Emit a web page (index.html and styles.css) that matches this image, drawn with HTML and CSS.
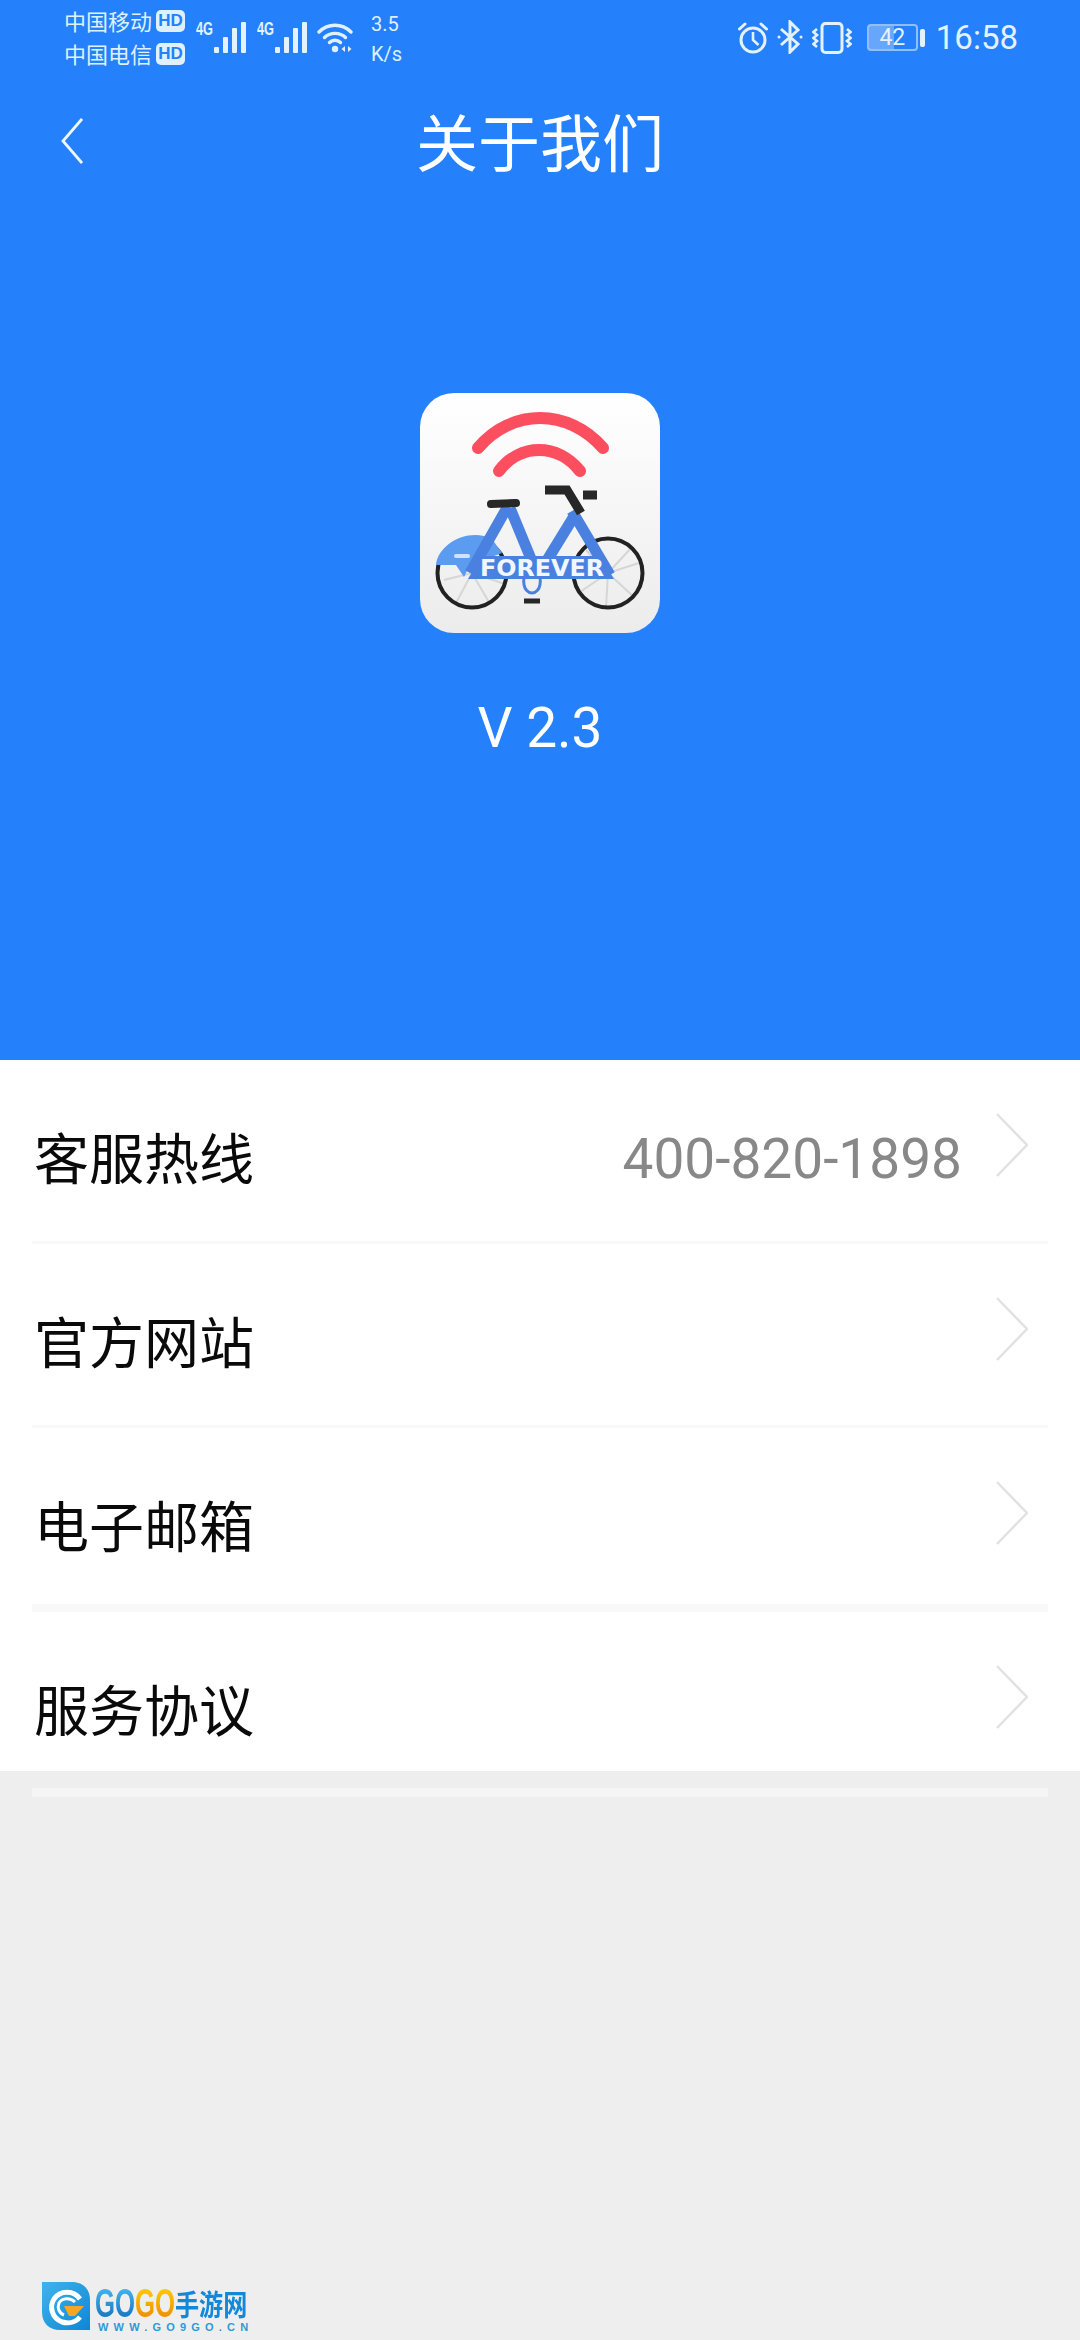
FILE: index.html
```html
<!DOCTYPE html>
<html lang="zh-CN">
<head>
  <meta charset="UTF-8">
  <meta name="viewport" content="width=device-width, initial-scale=1.0">
  <title>关于我们</title>
  <link rel="stylesheet" href="styles.css">
</head>
<body>
  <div class="page">
    <header class="hero">
      <!-- 状态栏 -->
      <div class="status">
        <div class="carriers">
          <div class="carrier">中国移动<span class="hd">HD</span></div>
          <div class="carrier">中国电信<span class="hd">HD</span></div>
        </div>
        <svg class="signal signal-first" width="50" height="38" viewBox="0 -6 50 38">
          <text class="signal-text" x="0" y="14" transform="scale(0.71 1)">4G</text>
          <rect x="18" y="26" width="5" height="6" rx="1"/>
          <rect x="27" y="16" width="5" height="16" rx="1"/>
          <rect x="36" y="7" width="5" height="25" rx="1"/>
          <rect x="45" y="1" width="5" height="31" rx="1"/>
        </svg>
        <svg class="signal signal-second" width="50" height="38" viewBox="0 -6 50 38">
          <text class="signal-text" x="0" y="14" transform="scale(0.71 1)">4G</text>
          <rect x="18" y="26" width="5" height="6" rx="1"/>
          <rect x="27" y="16" width="5" height="16" rx="1"/>
          <rect x="36" y="7" width="5" height="25" rx="1"/>
          <rect x="45" y="1" width="5" height="31" rx="1"/>
        </svg>
        <svg class="wifi" width="36" height="32" viewBox="0 0 36 32" fill="none" stroke="#dff0ff" stroke-width="3.4" stroke-linecap="round">
          <path d="M2 10 C11 1 25 1 34 10"/>
          <path d="M7.5 15.5 C13 10 23 10 28.500 15.500"/>
          <path d="M12.500 20.500 C15.500 17.500 20.500 17.500 23.500 20.500"/>
          <circle cx="18" cy="27" r="3.200" fill="#dff0ff" stroke="none"/>
          <path d="M28 24 L24.500 27 L28 30 Z M31 24 L34.500 27 L31 30 Z" fill="#dff0ff" stroke="none"/>
        </svg>
        <div class="speed">
          <div>3.5</div>
          <div>K/s</div>
        </div>
        <div class="status-right">
          <svg class="alarm" width="30" height="32" viewBox="0 0 30 32" fill="none" stroke="#e4f2ff" stroke-width="3">
            <circle cx="15" cy="18" r="12"/>
            <path d="M15 10 V18 L20.500 23" stroke-width="2.600"/>
            <path d="M1.500 7 L7 2 M28.500 7 L23 2" stroke-linecap="round"/>
          </svg>
          <svg class="bluetooth" width="26" height="34" viewBox="0 0 26 34" fill="none" stroke="#e4f2ff" stroke-width="3">
            <path d="M4 9 L21 24 L13 32 V2 L21 10 L4 25"/>
            <circle cx="2" cy="17" r="1.500" fill="#e4f2ff" stroke="none"/>
            <circle cx="24" cy="17" r="1.500" fill="#e4f2ff" stroke="none"/>
          </svg>
          <svg class="vibrate" width="40" height="32" viewBox="0 0 40 32" fill="none" stroke="#e4f2ff" stroke-width="2.600">
            <rect x="10" y="1.500" width="20" height="29" rx="3.500" stroke-width="3"/>
            <path d="M5 7 L1.500 10 L5 13 L1.500 16 L5 19 L1.500 22 L5 25"/>
            <path d="M35 7 L38.500 10 L35 13 L38.500 16 L35 19 L38.500 22 L35 25"/>
          </svg>
          <div class="battery">
            <div class="battery-body"><div class="battery-level"></div><span class="battery-num">42</span></div>
            <div class="battery-nub"></div>
          </div>
          <div class="clock">16:58</div>
        </div>
      </div>

      <!-- 标题栏 -->
      <div class="nav">
        <svg class="back" width="22" height="46" viewBox="0 0 22 46" fill="none" stroke="#eef7ff" stroke-width="2.800">
          <path d="M21 1 L2 23 L21 45"/>
        </svg>
        <h1 class="title">关于我们</h1>
      </div>

      <!-- 应用图标 -->
      <svg class="app-icon" width="240" height="240" viewBox="0 0 240 240">
        <defs>
          <linearGradient id="iconBg" x1="0" y1="0" x2="0" y2="1">
            <stop offset="0" stop-color="#ffffff"/>
            <stop offset="1" stop-color="#ececec"/>
          </linearGradient>
        </defs>
        <rect width="240" height="240" rx="34" fill="url(#iconBg)"/>
        <g fill="none" stroke="#fb4f60" stroke-width="12" stroke-linecap="round">
          <path d="M58 55 C92 15 148 15 183 55"/>
          <path d="M79 78 C100 50 138 50 160 78"/>
        </g>
        <g stroke="#d6d6d6" stroke-width="2">
          <path d="M52 180 L30 157 M52 180 L24 187 M52 180 L36 210 M52 180 L70 211 M52 180 L85 191"/>
          <path d="M188 180 L166 157 M188 180 L222 169 M188 180 L212 154 M188 180 L160 199 M188 180 L186 215 M188 180 L215 205"/>
        </g>
        <g fill="none" stroke="#222" stroke-width="4">
          <circle cx="52" cy="180" r="34.500"/>
          <circle cx="188" cy="180" r="34.500"/>
        </g>
        <path d="M16 172 C18 150 50 134 72 146 L82 160 L50 172 L44 184 L36 172 Z" fill="#5b9bf0"/>
        <rect x="34" y="161" width="16" height="4" rx="2" fill="#cfe2ff"/>
        <g fill="none" stroke="#4a80e0" stroke-width="11">
          <path d="M88 113 L50 180"/>
          <path d="M90 115 L116 178"/>
          <path d="M153 125 L118 182"/>
          <path d="M152 118 L190 182"/>
        </g>
        <path d="M104 184 C102 198 110 200 112 200 C114 200 122 198 120 184" fill="none" stroke="#4a80e0" stroke-width="3"/>
        <path d="M48 186 L62 163 L180 163 L194 186 Z" fill="#4a80e0"/>
        <text class="icon-text" x="60" y="183" textLength="124" lengthAdjust="spacingAndGlyphs">FOREVER</text>
        <g fill="none" stroke="#272727" stroke-linecap="round">
          <path d="M71 111 L96 110" stroke-width="8"/>
          <path d="M125 97 L147 97 L161 120" stroke-width="9" stroke-linecap="butt"/>
          <path d="M163 102 L177 102" stroke-width="9" stroke-linecap="butt"/>
          <path d="M104 208 L120 208" stroke-width="5" stroke-linecap="butt"/>
        </g>
      </svg>
      <div class="version">V 2.3</div>
    </header>

    <!-- 列表 -->
    <section class="list">
      <div class="row">
        <span class="row-label">客服热线</span>
        <span class="row-value">400-820-1898</span>
        <svg class="chevron" width="32" height="64" viewBox="0 0 32 64" fill="none" stroke="#e2e2e2" stroke-width="2.500">
          <path d="M1 1 L31 32 L1 63"/>
        </svg>
      </div>
      <div class="row">
        <span class="row-label">官方网站</span>
        <svg class="chevron" width="32" height="64" viewBox="0 0 32 64" fill="none" stroke="#e2e2e2" stroke-width="2.500">
          <path d="M1 1 L31 32 L1 63"/>
        </svg>
      </div>
      <div class="row row-thick">
        <span class="row-label">电子邮箱</span>
        <svg class="chevron" width="32" height="64" viewBox="0 0 32 64" fill="none" stroke="#e2e2e2" stroke-width="2.500">
          <path d="M1 1 L31 32 L1 63"/>
        </svg>
      </div>
      <div class="row row-last">
        <span class="row-label">服务协议</span>
        <svg class="chevron" width="32" height="64" viewBox="0 0 32 64" fill="none" stroke="#e2e2e2" stroke-width="2.500">
          <path d="M1 1 L31 32 L1 63"/>
        </svg>
      </div>
    </section>
    <div class="list-end"></div>
  </div>

  <!-- 水印 -->
  <div class="watermark">
    <svg width="48" height="48" viewBox="0 0 48 48">
      <defs>
        <linearGradient id="wmBg" x1="0" y1="0" x2="1" y2="1">
          <stop offset="0" stop-color="#3fb4ea"/>
          <stop offset="1" stop-color="#0f86d6"/>
        </linearGradient>
      </defs>
      <path d="M0 0 H30 C41 0 48 7 48 18 V48 H18 C7 48 0 41 0 30 Z" fill="url(#wmBg)"/>
      <path d="M38 17 C32 8 18 8 12 17 C7 25 10 36 20 40 C27 42 34 40 38 35" fill="none" stroke="#fff" stroke-width="5"/>
      <path d="M33 20 C28 15 20 16 17 21 C15 26 17 31 22 33" fill="none" stroke="#fff" stroke-width="3"/>
      <path d="M22 24 H42 L33 34 H27 Z" fill="#f6a623"/>
    </svg>
    <div class="wm-brand">
      <div class="wm-name">
        <span class="wm-go">GO</span><span class="wm-go wm-orange">GO</span><span class="wm-cn">手游网</span>
      </div>
      <div class="wm-url">WWW.GO9GO.CN</div>
    </div>
  </div>
</body>
</html>
```

FILE: styles.css
```css
/* 全局 */
* {
  box-sizing: border-box;
}
html,
body {
  height: 2340px;
  overflow: hidden;
}
body {
  margin: 0;
  background-color: #eeeeee;
  font-family: Roboto, "Noto Sans CJK SC", sans-serif;
}
.page {
  width: 1080px;
  height: 2340px;
  overflow: hidden;
}

/* 蓝色头部 */
.hero {
  height: 1060px;
  background-color: #2581fb;
  display: flex;
  flex-direction: column;
  align-items: center;
  color: #fff;
}

/* 状态栏 */
.status {
  width: 100%;
  height: 72px;
  display: flex;
  align-items: flex-start;
  padding-left: 64px;
  padding-right: 62px;
  color: #dff0ff;
}
.carriers {
  padding-top: 4px;
  font-size: 22px;
  line-height: 33px;
  font-family: "Noto Sans CJK SC", sans-serif;
}
.carrier {
  display: flex;
  align-items: center;
  white-space: nowrap;
}
.hd {
  width: 29px;
  height: 22px;
  margin-left: 4px;
  border-radius: 5px;
  background-color: #dff0ff;
  color: #2581fb;
  font: bold 17px/22px "Liberation Sans", sans-serif;
  text-align: center;
}
.signal {
  margin-top: 15px;
  fill: #e4f2ff;
}
.signal-first {
  margin-left: 11px;
}
.signal-second {
  margin-left: 11px;
}
.signal-text {
  font: bold 18px "Liberation Sans", sans-serif;
}
.wifi {
  margin-top: 22px;
  margin-left: 10px;
}
.speed {
  margin-left: 18px;
  padding-top: 9px;
  font-size: 20px;
  line-height: 30px;
}
.status-right {
  margin-left: auto;
  display: flex;
  align-items: flex-start;
  color: #e4f2ff;
}
.alarm {
  margin-top: 22px;
}
.bluetooth {
  margin-top: 20px;
  margin-left: 9px;
}
.vibrate {
  margin-top: 22px;
  margin-left: 9px;
}
.battery {
  margin-top: 24px;
  margin-left: 15px;
  display: flex;
  align-items: center;
}
.battery-body {
  position: relative;
  width: 51px;
  height: 27px;
  border: 2px solid #8fc0fd;
  border-radius: 4px;
  font-size: 23px;
  line-height: 23px;
  text-align: center;
}
.battery-level {
  position: absolute;
  left: 0;
  top: 0;
  bottom: 0;
  width: 54%;
  background-color: rgba(255, 255, 255, 0.3);
}
.battery-num {
  position: relative;
}
.battery-nub {
  width: 5px;
  height: 18px;
  margin-left: 2px;
  border-radius: 2px;
  background-color: #e4f2ff;
}
.clock {
  margin-top: 19px;
  margin-left: 11px;
  font-size: 33px;
  line-height: 38px;
}

/* 标题栏 */
.nav {
  width: 100%;
  height: 138px;
  display: grid;
  grid-template-columns: 1fr auto 1fr;
  align-items: center;
  padding-left: 61px;
}
.title {
  margin: 0 0 2px -61px;
  font-size: 62px;
  line-height: 70px;
  font-weight: 400;
  font-family: "Noto Sans CJK SC", sans-serif;
}

/* 应用图标和版本号 */
.app-icon {
  margin-top: 183px;
  flex: none;
}
.version {
  margin-top: 63px;
  font-size: 55px;
  line-height: 64px;
}
.icon-text {
  font: bold 23px "DejaVu Sans", sans-serif;
  fill: #f2f7ff;
}

/* 列表 */
.list {
  background-color: #fff;
}
.row {
  height: 184px;
  margin: 0 32px;
  padding-left: 2px;
  padding-right: 20px;
  display: flex;
  align-items: flex-start;
  border-bottom: 3px solid #f8f8f8;
}
.row-thick {
  border-bottom-width: 8px;
}
.row-last {
  height: 159px;
  border-bottom: none;
}
.row-label {
  margin-top: 68px;
  margin-right: auto;
  font-size: 55px;
  line-height: 54px;
  color: #0a0a0a;
  font-family: "Noto Sans CJK SC", sans-serif;
}
.row-value {
  margin-top: 72px;
  margin-right: 34px;
  font-size: 55px;
  line-height: 54px;
  color: #888;
}
.chevron {
  margin-top: 53px;
  flex: none;
}
.list-end {
  height: 9px;
  margin: 17px 32px 0;
  background-color: #f5f5f5;
}

/* 水印 */
.watermark {
  position: absolute;
  left: 42px;
  top: 2282px;
  display: flex;
  gap: 5px;
}
.wm-brand {
  padding-top: 5px;
}
.wm-name {
  display: flex;
  height: 35px;
}
.wm-go {
  display: inline-block;
  width: 63px;
  margin-right: -23px;
  font: bold 40px/32px "Liberation Sans", sans-serif;
  transform: scaleX(0.645);
  transform-origin: left;
  background: linear-gradient(#46b6ee, #0d6fc2);
  -webkit-background-clip: text;
  background-clip: text;
  color: transparent;
}
.wm-orange {
  background: linear-gradient(#ffcc00, #ef8500);
  -webkit-background-clip: text;
  background-clip: text;
}
.wm-cn {
  display: inline-block;
  width: 87px;
  margin-right: -15px;
  font: bold 29px/32px "Noto Sans CJK SC", sans-serif;
  white-space: nowrap;
  transform: scaleX(0.83);
  transform-origin: left;
  color: #1488d8;
}
.wm-url {
  margin-left: 3px;
  font: bold 11px/11px "Liberation Sans", sans-serif;
  letter-spacing: 5.2px;
  color: #2c9ad8;
  white-space: nowrap;
}
```
